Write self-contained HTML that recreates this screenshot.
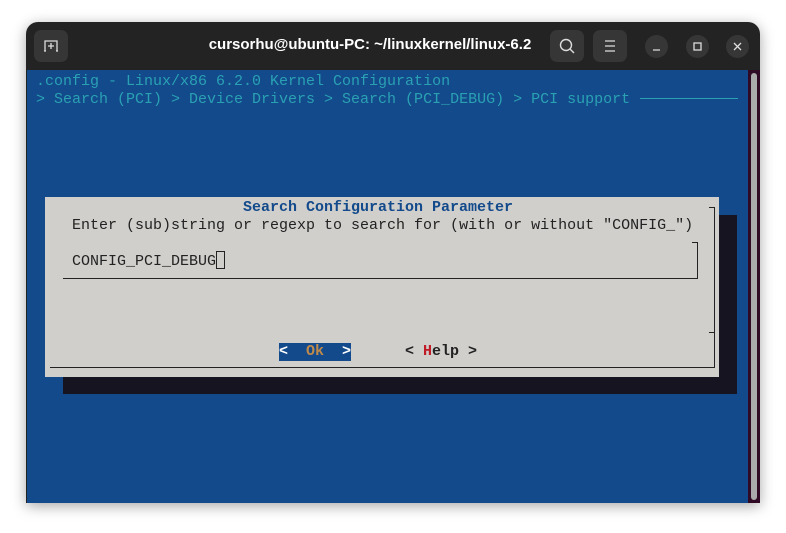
<!DOCTYPE html>
<html><head><meta charset="utf-8"><style>
body{margin:0;width:786px;height:533px;background:#fff;position:relative;overflow:hidden;font-family:"Liberation Mono",monospace}
.win{position:absolute;left:26px;top:22px;width:734px;height:481px;background:#232323;border-radius:12px 12px 0 0;box-shadow:0 3px 14px rgba(0,0,0,.35);overflow:hidden}
.btn{position:absolute;top:8px;width:34px;height:32px;background:#363636;border-radius:7px}
.cb{position:absolute;top:13px;width:23px;height:23px;border-radius:50%;background:#363636}
.title{position:absolute;left:144px;width:400px;top:14px;text-align:center;color:#fff;font:bold 15px "Liberation Sans",sans-serif}
.term{position:absolute;left:1px;top:48px;width:721px;height:433px;background:#134a8b}
.sb{position:absolute;left:722px;top:48px;width:12px;height:433px;background:#300a24}
.sb div{position:absolute;left:3px;top:3px;width:6px;height:427px;background:#aaa;border-radius:3px}
.t{position:absolute;font-size:15px;line-height:18px;white-space:pre;color:#2aa1b3}
.d{color:#222}
</style></head><body>
<div class="win">
 <div class="btn" style="left:8px"><svg width="34" height="32"><path d="M11 21V11h12v10" fill="none" stroke="#ddd" stroke-width="1.3"/><path d="M10 21h2M22 21h2M17 13v6M14 16h6" stroke="#ddd" stroke-width="1.3"/></svg></div>
 <div class="title">cursorhu@ubuntu-PC: ~/linuxkernel/linux-6.2</div>
 <div class="btn" style="left:524px"><svg width="34" height="32"><circle cx="16" cy="15" r="5.5" fill="none" stroke="#ddd" stroke-width="1.4"/><path d="M20 19l4 4" stroke="#ddd" stroke-width="1.4"/></svg></div>
 <div class="btn" style="left:567px"><svg width="34" height="32"><path d="M12 11h10M12 16h10M12 21h10" stroke="#ddd" stroke-width="1.3"/></svg></div>
 <div class="cb" style="left:619px"><svg width="23" height="23"><path d="M8 15h7" stroke="#ddd" stroke-width="1.3"/></svg></div>
 <div class="cb" style="left:660px"><svg width="23" height="23"><rect x="8" y="8" width="7" height="7" fill="none" stroke="#ddd" stroke-width="1.3"/></svg></div>
 <div class="cb" style="left:700px"><svg width="23" height="23"><path d="M8 8l7 7M15 8l-7 7" stroke="#ddd" stroke-width="1.3"/></svg></div>
 <div class="term"></div>
 <div class="sb"><div></div></div>
</div>
<div class="t" style="left:36px;top:73px">.config - Linux/x86 6.2.0 Kernel Configuration</div>
<div class="t" style="left:36px;top:91px">&gt; Search (PCI) &gt; Device Drivers &gt; Search (PCI_DEBUG) &gt; PCI support</div>
<div style="position:absolute;left:640px;top:98px;width:98px;height:1px;background:#2aa1b3"></div>
<div style="position:absolute;left:63px;top:215px;width:674px;height:179px;background:#171421"></div>
<div style="position:absolute;left:45px;top:197px;width:674px;height:180px;background:#d0cfcc"></div>
<div style="position:absolute;left:50px;top:367px;width:665px;height:1px;background:#222"></div>
<div style="position:absolute;left:714px;top:207px;width:1px;height:161px;background:#222"></div>
<div style="position:absolute;left:709px;top:207px;width:6px;height:1px;background:#222"></div>
<div style="position:absolute;left:709px;top:332px;width:6px;height:1px;background:#222"></div>
<div style="position:absolute;left:63px;top:278px;width:635px;height:1px;background:#222"></div>
<div style="position:absolute;left:697px;top:242px;width:1px;height:37px;background:#222"></div>
<div style="position:absolute;left:692px;top:242px;width:6px;height:1px;background:#222"></div>
<div class="t" style="left:243px;top:199px;color:#134a8b;font-weight:bold">Search Configuration Parameter</div>
<div class="t d" style="left:72px;top:217px">Enter (sub)string or regexp to search for (with or without "CONFIG_")</div>
<div class="t d" style="left:72px;top:253px">CONFIG_PCI_DEBUG</div>
<div style="position:absolute;left:216px;top:251px;width:9px;height:18px;border:1px solid #222;box-sizing:border-box"></div>
<div class="t" style="left:279px;top:343px;background:#134a8b;color:#fff;font-weight:bold;width:72px">&lt;  <span style="color:#c08a4a">Ok</span>  &gt;</div>
<div class="t d" style="left:405px;top:343px;font-weight:bold">&lt; <span style="color:#c01c28">H</span>elp &gt;</div>
</body></html>
